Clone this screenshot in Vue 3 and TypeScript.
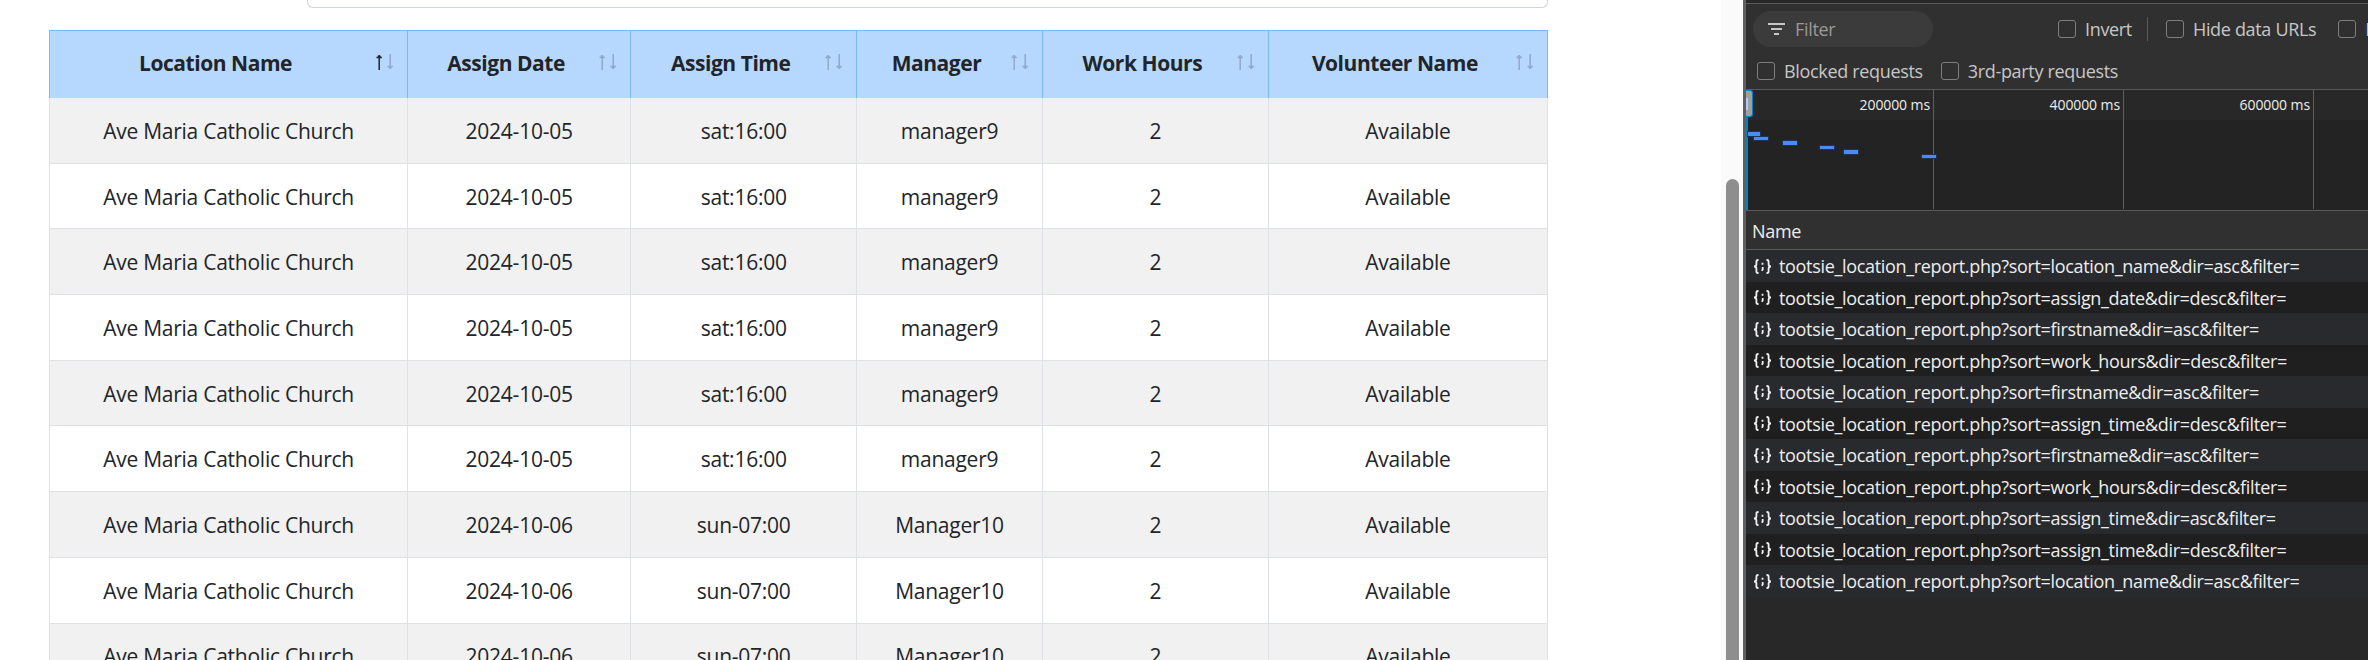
<template>
  <div class="screen">
    <!-- Page under the devtools -->
    <main class="page">
      <div class="search-row"><div class="search-box"></div></div>
      <table class="report">
        <colgroup>
          <col v-for="c in columns" :key="c.label" :style="{ width: c.width + 'px' }" />
        </colgroup>
        <thead>
          <tr>
            <th v-for="(c, i) in columns" :key="c.label">
              {{ c.label }}
              <svg class="sort" width="18" height="16" viewBox="0 0 18 16">
                <g fill="none" stroke-width="1.5">
                  <path :class="i === 0 ? 'on' : 'off'" d="M3.2 1v15M.5 3.6h5.4M1.6 2.4h3.2" />
                  <path class="off" d="M14.2 0v15M11.5 12.4h5.4M12.6 13.6h3.2" />
                </g>
              </svg>
            </th>
          </tr>
        </thead>
        <tbody>
          <tr v-for="(r, i) in rows" :key="i">
            <td>{{ r.location }}</td>
            <td>{{ r.date }}</td>
            <td>{{ r.time }}</td>
            <td>{{ r.manager }}</td>
            <td>2</td>
            <td>Available</td>
          </tr>
        </tbody>
      </table>
    </main>

    <div class="gutter"><div class="thumb"></div></div>

    <!-- Network panel -->
    <aside class="devtools">
      <div class="top-strip"></div>
      <div class="filter-row">
        <div class="filter-pill">
          <svg width="17" height="12" viewBox="0 0 17 12">
            <path d="M0 1h17M3 6h11M6 11h5" stroke="#c4c7c5" stroke-width="2" fill="none" />
          </svg>
          <span>Filter</span>
        </div>
        <label class="check first"><i></i>Invert</label>
        <span class="divider"></span>
        <label class="check"><i></i>Hide data URLs</label>
        <label class="check last"><i></i>Hide extension URLs</label>
      </div>
      <div class="filter-row second">
        <label class="check"><i></i>Blocked requests</label>
        <label class="check"><i></i>3rd-party requests</label>
      </div>

      <div class="overview">
        <div class="ticks">
          <span v-for="t in ticks" :key="t" class="tick">{{ t }}</span>
        </div>
        <div class="bars">
          <span
            v-for="(b, i) in bars"
            :key="i"
            class="bar"
            :style="{ left: b.x + 'px', top: b.y + 'px', width: b.w + 'px' }"
          ></span>
        </div>
        <div class="handle"></div>
      </div>

      <div class="name-head">Name</div>
      <div class="requests">
        <div v-for="(q, i) in requests" :key="i" class="request">
          <svg width="19" height="15" viewBox="0 0 19 15" fill="none" stroke="#f0f0f0" stroke-width="1.8">
            <path d="M5.500 1H5C3.800 1 3.400 1.800 3.400 2.800v2.400C3.400 6.500 2.600 7.500 1 7.500c1.600 0 2.400 1 2.400 2.300v2.400c0 1 .4 1.800 1.600 1.800h.5" />
            <path d="M13.500 1h.5c1.200 0 1.600.8 1.600 1.800v2.400c0 1.300.8 2.300 2.400 2.300-1.600 0-2.400 1-2.400 2.300v2.400c0 1-.4 1.800-1.600 1.800h-.5" />
            <path d="M9.500 3.800v2M9.700 8v2.400l-.9 1.400" />
          </svg>
          <span>tootsie_location_report.php?sort={{ q }}&amp;filter=</span>
        </div>
      </div>
    </aside>
  </div>
</template>

<script setup lang="ts">
const columns = [
  { label: "Location Name", width: 358 },
  { label: "Assign Date", width: 223 },
  { label: "Assign Time", width: 226 },
  { label: "Manager", width: 185.5 },
  { label: "Work Hours", width: 226 },
  { label: "Volunteer Name", width: 280 },
];

const day = (date: string, time: string, manager: string, n: number) =>
  Array.from({ length: n }, () => ({
    location: "Ave Maria Catholic Church",
    date,
    time,
    manager,
  }));

const rows = [
  ...day("2024-10-05", "sat:16:00", "manager9", 6),
  ...day("2024-10-06", "sun-07:00", "Manager10", 3),
];

const ticks = ["200000 ms", "400000 ms", "600000 ms"];

const bars = [
  { x: 1.7, y: 42, w: 12 },
  { x: 8.3, y: 46.5, w: 14 },
  { x: 37.3, y: 51, w: 14 },
  { x: 74, y: 55.5, w: 14 },
  { x: 98, y: 60, w: 14 },
  { x: 176, y: 64.5, w: 14 },
];

const requests = [
  "location_name&dir=asc",
  "assign_date&dir=desc",
  "firstname&dir=asc",
  "work_hours&dir=desc",
  "firstname&dir=asc",
  "assign_time&dir=desc",
  "firstname&dir=asc",
  "work_hours&dir=desc",
  "assign_time&dir=asc",
  "assign_time&dir=desc",
  "location_name&dir=asc",
];
</script>

<style>
html,
body {
  margin: 0;
  background: #fff;
  overflow: hidden;
}
</style>

<style scoped>
.screen {
  display: flex;
  width: 2368px;
  height: 660px;
  overflow: hidden;
  font-family: "Open Sans", "Noto Sans", sans-serif;
}

.page {
  width: 1721px;
  flex: none;
  padding-left: 49px;
  box-sizing: border-box;
}

.search-row {
  display: flex;
  justify-content: flex-end;
  width: 1499px;
  height: 30px;
}

.search-box {
  width: 1241px;
  height: 8px;
  box-sizing: border-box;
  border: 1.5px solid #ced4da;
  border-top: none;
  border-radius: 0 0 6px 6px;
}

.report {
  table-layout: fixed;
  width: 1499px;
  border-collapse: separate;
  border-spacing: 0;
  color: #212529;
  font-size: 21px;
  letter-spacing: -0.25px;
}

th {
  position: relative;
  height: 68px;
  padding: 0 38px 3px 12px;
  box-sizing: border-box;
  background: #b6d8ff;
  border-top: 1.5px solid #7ab8fa;
  border-left: 1.5px solid #7ab8fa;
  font-weight: 700;
  text-align: center;
  letter-spacing: -0.45px;
}

th:last-child,
td:last-child {
  border-right: 1.5px solid #dee2e6;
}

th:last-child {
  border-right-color: #7ab8fa;
}

.sort {
  position: absolute;
  right: 13px;
  top: 23px;
}

.sort .on {
  stroke: #212529;
}

.sort .off {
  stroke: #212529;
  opacity: 0.25;
}

td {
  height: 65.7px;
  padding: 1px 12px 0;
  box-sizing: border-box;
  border-bottom: 1.5px solid #dee2e6;
  border-left: 1.5px solid #dee2e6;
  text-align: center;
  background: #fff;
}

tbody tr:nth-child(odd) td {
  background: #f1f1f1;
}

.gutter {
  width: 22px;
  flex: none;
  padding-left: 5px;
  box-sizing: border-box;
  background: #fafafa;
}

.thumb {
  width: 13px;
  height: 481px;
  margin-top: 179px;
  border-radius: 7px 7px 0 0;
  background: #8e8e8e;
}

.devtools {
  flex: 1;
  min-width: 0;
  box-sizing: border-box;
  border-left: 3px solid #5f5f5f;
  background: #282828;
  color: #eee;
  font-size: 18px;
  letter-spacing: -0.33px;
  overflow: hidden;
}

.top-strip {
  height: 4px;
  border-bottom: 1px solid #5a5a5a;
  box-sizing: border-box;
}

.filter-row {
  display: flex;
  align-items: center;
  height: 50px;
  padding-left: 7px;
  background: #303030;
  color: #c7c7c7;
  white-space: nowrap;
}

.filter-row.second {
  height: 35px;
  padding-left: 11px;
  gap: 18px;
  padding-bottom: 2px;
  box-sizing: border-box;
}

.filter-pill {
  display: flex;
  align-items: center;
  flex: none;
  gap: 10px;
  width: 180px;
  height: 36px;
  padding-left: 15px;
  box-sizing: border-box;
  border-radius: 18px;
  background: #3b3b3b;
  color: #9a9a9a;
}

.check {
  display: flex;
  align-items: center;
  flex: none;
  gap: 9px;
}

.check i {
  width: 18px;
  height: 18px;
  box-sizing: border-box;
  border: 1.5px solid #7f7f7f;
  border-radius: 3px;
}

.check.first {
  margin-left: 125px;
}

.check.last {
  margin-left: 22px;
}

.divider {
  width: 1px;
  height: 24px;
  flex: none;
  margin: 0 18px 0 15px;
  background: #5a5a5a;
}

.overview {
  position: relative;
  height: 122px;
  border-top: 1.5px solid #5a5a5a;
  border-bottom: 1.5px solid #5a5a5a;
  box-sizing: border-box;
  background: #232323;
}

.ticks {
  display: flex;
  height: 30px;
  background: #282828;
  font-size: 14px;
  letter-spacing: -0.1px;
  color: #eee;
}

.tick {
  width: 188px;
  height: 119px;
  line-height: 30px;
  padding-right: 3px;
  box-sizing: border-box;
  text-align: right;
  border-right: 1.5px solid #5f5f5f;
  flex: none;
  margin-right: 2px;
}

.bars {
  position: absolute;
  inset: 0;
}

.bar {
  position: absolute;
  height: 3.5px;
  box-sizing: border-box;
  background: #4a8cf5;
  outline: 1px solid #1d3354;
}

.overview::before {
  content: "";
  position: absolute;
  left: 0;
  top: 0;
  bottom: 0;
  width: 2px;
  background: #0a7fbf;
}

.handle {
  position: absolute;
  left: 0;
  top: 0;
  width: 6.5px;
  height: 27px;
  background: #a0a0a0;
  border: 1px solid #0a7fbf;
  border-left: none;
  border-radius: 0 3px 3px 0;
  box-sizing: border-box;
}

.handle::after {
  content: "";
  position: absolute;
  left: 0;
  top: 7px;
  width: 2px;
  height: 12px;
  background: #b4ccff;
}

.name-head {
  height: 39px;
  line-height: 40px;
  padding-left: 6px;
  box-sizing: border-box;
  background: #303030;
  border-bottom: 1.5px solid #5a5a5a;
}

.request {
  display: flex;
  align-items: center;
  gap: 7px;
  height: 31.5px;
  padding: 1px 0 0 7px;
  box-sizing: border-box;
  white-space: nowrap;
  background: #292a2d;
}

.request:nth-child(even) {
  background: #1f1f1f;
}
</style>
